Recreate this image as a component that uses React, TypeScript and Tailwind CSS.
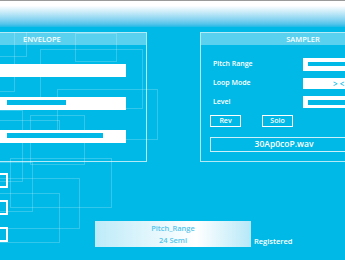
import React from 'react';

const lines = [
  'left-[-2px] top-[12px] w-[17px] h-[80px]',
  'left-[-2px] top-[13px] w-[29px] h-[44px]',
  'left-[40px] top-[49px] w-[103px] h-[60px]',
  'left-[75px] top-[33px] w-[42px] h-[29px]',
  'left-[57px] top-[89px] w-[101px] h-[51px]',
  'left-[-2px] top-[120px] w-[62px] h-[15px]',
  'left-[-2px] top-[110px] w-[25px] h-[72px]',
  'left-[30px] top-[115px] w-[55px] h-[50px]',
  'left-[10px] top-[158px] w-[102px] h-[50px]',
  'left-[-2px] top-[162px] w-[35px] h-[50px]',
  'left-[-2px] top-[178px] w-[82px] h-[51px]',
  'left-[-2px] top-[193px] w-[62px] h-[50px]',
];

function Bar({ inner }: { inner?: string }) {
  return (
    <div className="h-[13px] w-[126px] shrink-0 bg-white px-[7px] py-[3px]">
      {inner && <div className={`h-[5px] bg-[#00b9e6] ${inner}`} />}
    </div>
  );
}

function Envelope() {
  return (
    <div className="ml-[-10px] flex h-[130px] w-[157px] shrink-0 flex-col border border-white/70">
      <div className="h-[12px] bg-white/35 pl-[32px] text-[7.5px] leading-[12px] font-semibold text-white">ENVELOPE</div>
      <div className="flex flex-col gap-[20px] pl-[9px] pt-[19px]">
        <Bar />
        <Bar inner="w-[59px]" />
        <Bar inner="w-[96px]" />
      </div>
    </div>
  );
}

function Field({ children, h }: { children?: React.ReactNode; h: string }) {
  return (
    <div className={`${h} w-[110px] bg-white px-[5px] py-[3px]`}>{children}</div>
  );
}

function Sampler() {
  return (
    <div className="ml-[53px] flex h-[130px] w-[206px] shrink-0 flex-col border border-white/70">
      <div className="h-[12px] bg-white/35 text-center text-[7.5px] leading-[12px] font-semibold text-white">SAMPLER</div>
      <div className="mt-[13px] grid grid-cols-[90px_110px] items-center gap-y-[7px] pl-[12px] text-[7px] font-semibold text-white">
        <span>Pitch Range</span>
        <Field h="h-[13px]">
          <div className="mt-[1px] h-[4px] bg-[#00b9e6]" />
        </Field>
        <span>Loop Mode</span>
        <Field h="h-[11px]">
          <div className="pl-[25px] text-[8px] leading-[5px] text-[#00b9e6]">&gt; &lt;</div>
        </Field>
        <span>Level</span>
        <Field h="h-[12px]">
          <div className="mt-[0.5px] h-[5px] bg-[#00b9e6]" />
        </Field>
      </div>
      <div className="mt-[7px] flex gap-[21px] pl-[9px]">
        <div className="h-[12px] w-[31px] border-[1.5px] border-white text-center text-[7px] leading-[9px] font-semibold text-white">Rev</div>
        <div className="h-[12px] w-[31px] border-[1.5px] border-white text-center text-[7px] leading-[9px] font-semibold text-white">Solo</div>
      </div>
      <div className="ml-[9px] mt-[10px] h-[15px] w-[148px] border-[1.5px] border-white/80 text-center text-[8.5px] leading-[12px] font-semibold text-white">
        30Ap0coP.wav
      </div>
    </div>
  );
}

export default function App() {
  return (
    <div
      className="relative h-[260px] w-[345px] overflow-hidden bg-[#00b9e6]"
      style={{ fontFamily: '"Open Sans", "Liberation Sans", sans-serif' }}
    >
      {lines.map((c, i) => (
        <div key={i} className={`pointer-events-none absolute border border-white/20 ${c}`} />
      ))}
      <div className="relative">
        <div className="h-[32px] border-t border-[#9a9a9a] bg-gradient-to-b from-white from-15% to-[#00b9e6] to-85%" />
        <div className="flex">
          <Envelope />
          <Sampler />
        </div>
        <div className="flex items-start">
          <div className="ml-[-4px] mt-[11px] flex shrink-0 flex-col gap-[12px]">
            <div className="h-[15px] w-[12px] border-2 border-white" />
            <div className="h-[15px] w-[12px] border-2 border-white" />
            <div className="h-[15px] w-[12px] border-2 border-white" />
          </div>
          <div className="ml-[87px] mt-[59px] flex h-[26px] w-[156px] shrink-0 flex-col items-center justify-center bg-gradient-to-r from-[#bdebf9] via-white via-65% to-[#b5e8f8] text-[7.5px] leading-[12px] font-semibold text-[#55c4ea]">
            <span>Pitch_Range</span>
            <span>24 Semi</span>
          </div>
          <div className="ml-[3px] mt-[74px] shrink-0 text-[7.5px] font-semibold text-white">Registered</div>
        </div>
      </div>
    </div>
  );
}
